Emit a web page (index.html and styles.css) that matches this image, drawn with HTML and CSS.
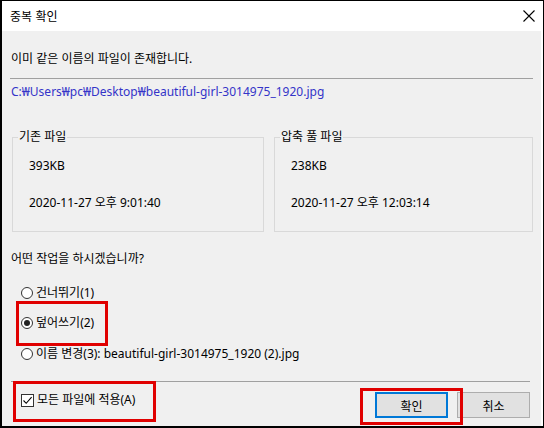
FILE: index.html
```html
<!DOCTYPE html>
<html lang="ko">
<head>
<meta charset="utf-8">
<title>중복 확인</title>
<link rel="stylesheet" href="styles.css">
</head>
<body>
<div class="dialog">
  <div class="titlebar">
    <span class="title">중복 확인</span>
    <svg class="close" width="12" height="12" viewBox="0 0 12 12"><path d="M0.5 0.5 L11.5 11.5 M11.5 0.5 L0.5 11.5" stroke="#000" stroke-width="1.1" fill="none"/></svg>
  </div>
  <div class="content">
    <p class="msg">이미 같은 이름의 파일이 존재합니다.</p>
    <div class="sep"></div>
    <p class="path">C:₩Users₩pc₩Desktop₩beautiful-girl-3014975_1920.jpg</p>
    <div class="groups">
      <fieldset class="group">
        <legend>기존 파일</legend>
        <div class="info">393KB</div>
        <div class="info date">2020-11-27 오후 9:01:40</div>
      </fieldset>
      <fieldset class="group">
        <legend>압축 풀 파일</legend>
        <div class="info">238KB</div>
        <div class="info date">2020-11-27 오후 12:03:14</div>
      </fieldset>
    </div>
    <p class="question">어떤 작업을 하시겠습니까?</p>
    <div class="options">
      <div class="opt"><span class="radio"></span><span>건너뛰기(1)</span></div>
      <div class="opt"><span class="radio on"></span><span>덮어쓰기(2)</span></div>
      <div class="opt"><span class="radio"></span><span>이름 변경(3): beautiful-girl-3014975_1920 (2).jpg</span></div>
    </div>
    <div class="footer">
      <div class="check">
        <span class="box"><svg width="11" height="11" viewBox="0 0 11 11"><path d="M1.5 5.5 L4.2 8.3 L9.6 2.2" stroke="#000" stroke-width="1.1" fill="none"/></svg></span>
        <span>모든 파일에 적용(A)</span>
      </div>
      <div class="buttons">
        <button class="btn primary">확인</button>
        <button class="btn">취소</button>
      </div>
    </div>
  </div>
  <div class="mark mark-overwrite"></div>
  <div class="mark mark-all"></div>
  <div class="mark mark-ok"></div>
</div>
</body>
</html>
```
FILE: styles.css
```css
html, body {
  margin: 0;
  padding: 0;
}
body {
  width: 544px;
  height: 428px;
  overflow: hidden;
  font-family: "Noto Sans", "Noto Sans CJK KR", sans-serif;
  font-size: 12px;
  line-height: 16px;
  color: #000;
}
.dialog {
  position: relative;
  width: 544px;
  height: 428px;
  box-sizing: border-box;
  border-style: solid;
  border-color: #000;
  border-width: 1px 1px 2px 2px;
  background: #fff;
  display: flex;
  flex-direction: column;
}
.titlebar {
  height: 30px;
  flex: none;
  display: flex;
  align-items: center;
  justify-content: space-between;
  padding: 0 8px 0 8px;
  background: #fff;
}
.title {
  font-family: "Noto Sans CJK KR", sans-serif;
}
.close {
  display: block;
  margin-right: 0;
}
.content {
  flex: 1;
  background: #f0f0f0;
  margin-right: 2px;
  padding: 20px 8px 0 9px;
  display: flex;
  flex-direction: column;
}
p {
  margin: 0;
}
.msg {
  height: 16px;
}
.sep {
  height: 1px;
  background: #a0a0a0;
  margin-top: 11px;
  margin-left: -1px;
}
.path {
  margin-top: 5px;
  color: #3434c8;
}
.groups {
  display: grid;
  grid-template-columns: 252px 259px;
  column-gap: 10px;
  margin-top: 29px;
  margin-left: 1px;
}
.group {
  margin: 0;
  border: 1px solid #d9d9d9;
  padding: 13px 4px 20px 5px;
  min-width: 0;
}
.group legend {
  padding: 0 1px;
  line-height: 16px;
}
.info {
  margin-left: 11px;
  height: 16px;
}
.info.date {
  margin-top: 21px;
}
.question {
  margin-top: 19px;
}
.options {
  margin-top: 11px;
  display: flex;
  flex-direction: column;
  padding-left: 10px;
}
.opt {
  height: 30px;
  display: flex;
  align-items: center;
  gap: 3px;
}
.opt:nth-child(3) {
  height: 31px;
}
.radio {
  width: 12px;
  height: 12px;
  box-sizing: border-box;
  border: 1px solid #333;
  border-radius: 50%;
  background: #fff;
  position: relative;
  flex: none;
}
.radio.on::after {
  content: "";
  position: absolute;
  left: 2px;
  top: 2px;
  width: 6px;
  height: 6px;
  border-radius: 50%;
  background: #222;
}
.footer {
  margin-top: 12px;
  margin-right: 3px;
  border-top: 1px solid #a0a0a0;
  display: flex;
  justify-content: space-between;
  align-items: flex-start;
  padding-top: 10px;
}
.check {
  display: flex;
  align-items: center;
  gap: 3px;
  padding-left: 10px;
  height: 16px;
}
.box {
  width: 13px;
  height: 13px;
  box-sizing: border-box;
  border: 1px solid #333;
  background: #fff;
  display: flex;
  align-items: center;
  justify-content: center;
  flex: none;
}
.box svg {
  display: block;
}
.buttons {
  display: flex;
  gap: 9px;
}
.btn {
  width: 73px;
  height: 26px;
  box-sizing: border-box;
  border: 1px solid #adadad;
  background: #e1e1e1;
  font-family: "Noto Sans CJK KR", sans-serif;
  font-size: 12px;
  color: #000;
  padding: 0;
  margin: 0;
}
.btn.primary {
  border: 2px solid #0078d7;
}
.mark {
  position: absolute;
  border: 3px solid #e00000;
  box-sizing: border-box;
  pointer-events: none;
}
.mark-overwrite {
  left: 14px;
  top: 300px;
  width: 92px;
  height: 45px;
}
.mark-all {
  left: 11px;
  top: 380px;
  width: 143px;
  height: 41px;
}
.mark-ok {
  left: 358px;
  top: 387px;
  width: 103px;
  height: 37px;
}
```
